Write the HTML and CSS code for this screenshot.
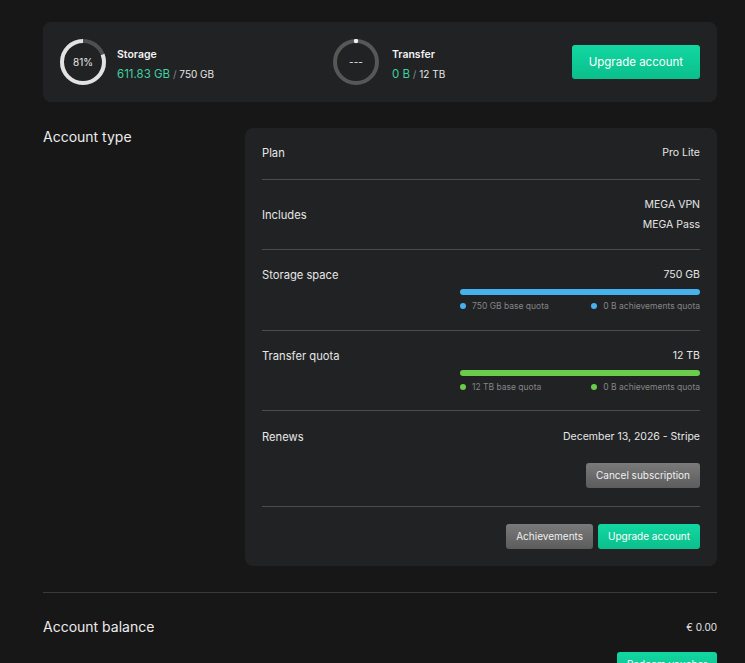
FILE: index.html
```html
<!DOCTYPE html>
<html lang="en">
<head>
  <meta charset="UTF-8">
  <meta name="viewport" content="width=device-width, initial-scale=1.0">
  <title>Account - MEGA</title>
  <link rel="stylesheet" href="styles.css">
</head>
<body>
  <div class="page">
    <div class="usage-card">
      <div class="usage storage">
        <div class="ring">
          <svg width="46" height="46" viewBox="0 0 46 46">
            <circle cx="23" cy="23" r="21" fill="none" stroke="#4f4f4f" stroke-width="4"/>
            <circle cx="23" cy="23" r="21" fill="none" stroke="#e2e2e2" stroke-width="4"
                    stroke-dasharray="106.9 132" stroke-dashoffset="-25.1" transform="rotate(-90 23 23)"/>
          </svg>
          <span class="ring-label">81%</span>
        </div>
        <div class="usage-text">
          <div class="usage-title">Storage</div>
          <div class="usage-value"><span class="used">611.83 GB</span> <span class="sep">/</span> 750 GB</div>
        </div>
      </div>
      <div class="usage transfer">
        <div class="ring">
          <svg width="46" height="46" viewBox="0 0 46 46">
            <circle cx="23" cy="23" r="21" fill="none" stroke="#575757" stroke-width="4"/>
            <circle cx="23" cy="2" r="2.2" fill="#f0f0f0"/>
          </svg>
          <span class="ring-label">---</span>
        </div>
        <div class="usage-text">
          <div class="usage-title">Transfer</div>
          <div class="usage-value"><span class="used">0 B</span> <span class="sep">/</span> 12 TB</div>
        </div>
      </div>
      <a href="#" class="btn btn-green btn-big">Upgrade account</a>
    </div>

    <section class="section">
      <h2 class="section-title">Account type</h2>
      <div class="plan-card">
        <div class="row plan">
          <span class="label">Plan</span>
          <span class="value">Pro Lite</span>
        </div>
        <div class="row includes">
          <span class="label">Includes</span>
          <div class="value stack">
            <span>MEGA VPN</span>
            <span>MEGA Pass</span>
          </div>
        </div>
        <div class="row top">
          <span class="label">Storage space</span>
          <div class="quota">
            <div class="quota-total value">750 GB</div>
            <div class="bar blue"></div>
            <div class="legend blue">
              <span><i class="dot"></i>750 GB base quota</span>
              <span><i class="dot"></i>0 B achievements quota</span>
            </div>
          </div>
        </div>
        <div class="row top transfer-row">
          <span class="label">Transfer quota</span>
          <div class="quota">
            <div class="quota-total value">12 TB</div>
            <div class="bar green"></div>
            <div class="legend green">
              <span><i class="dot"></i>12 TB base quota</span>
              <span><i class="dot"></i>0 B achievements quota</span>
            </div>
          </div>
        </div>
        <div class="row renews">
          <div class="renews-line">
            <span class="label">Renews</span>
            <span class="value">December 13, 2026 - Stripe</span>
          </div>
          <div class="actions">
            <a href="#" class="btn btn-grey">Cancel subscription</a>
          </div>
        </div>
        <div class="row last">
          <div class="actions">
            <a href="#" class="btn btn-grey">Achievements</a>
            <a href="#" class="btn btn-green">Upgrade account</a>
          </div>
        </div>
      </div>
    </section>

    <hr class="divider">

    <section class="balance">
      <div class="balance-line">
        <h2 class="section-title">Account balance</h2>
        <span class="value">€ 0.00</span>
      </div>
      <div class="actions">
        <a href="#" class="btn btn-green">Redeem voucher</a>
      </div>
    </section>
  </div>
</body>
</html>
```

FILE: styles.css
```css
* {
  margin: 0;
  padding: 0;
  box-sizing: border-box;
}

body {
  background: #171717;
  color: #e6e6e6;
  font-family: 'Inter', 'Liberation Sans', sans-serif;
  font-size: 11px;
  overflow: hidden;
}

.page {
  width: 674px;
  margin-left: 43px;
  padding-top: 22px;
}

/* usage summary */
.usage-card {
  display: flex;
  align-items: center;
  height: 80px;
  padding: 0 17px;
  background: #212224;
  border-radius: 8px;
}

.usage {
  display: flex;
  align-items: center;
  gap: 11px;
}

.usage.storage {
  width: 273px;
}

.usage.transfer {
  flex: 1;
  gap: 13px;
}

.ring {
  position: relative;
  width: 46px;
  height: 46px;
}

.ring svg {
  display: block;
}

.ring-label {
  position: absolute;
  inset: 0;
  display: flex;
  align-items: center;
  justify-content: center;
  font-size: 10px;
  color: #e8e8e8;
}

.usage-text {
  padding-top: 4px;
}

.usage-title {
  font-weight: 600;
  font-size: 10.5px;
  color: #f2f2f2;
  line-height: 16px;
}

.usage-value {
  margin-top: 3px;
  font-size: 10px;
  line-height: 16px;
  color: #e6e6e6;
}

.usage-value .used {
  color: #3fd1a0;
  font-size: 11.5px;
}

.usage-value .sep {
  color: #8a8a8a;
}

/* buttons */
.btn {
  display: inline-block;
  height: 25px;
  line-height: 25px;
  padding: 0 10px;
  border-radius: 3px;
  font-size: 10px;
  color: #f0f0f0;
  text-decoration: none;
  white-space: nowrap;
}

.btn-green {
  background: linear-gradient(180deg, #12d7a2, #0bbf8b);
  color: #fff;
}

.btn-grey {
  background: linear-gradient(180deg, #7a7a7a, #5c5c5c);
}

.btn-big {
  height: 34px;
  line-height: 34px;
  padding: 0 17px;
  font-size: 11.5px;
}

/* account type */
.section {
  display: grid;
  grid-template-columns: 202px 1fr;
  margin-top: 26px;
}

.section-title {
  font-size: 14px;
  font-weight: 400;
  color: #ececec;
  line-height: 18px;
}

.plan-card {
  background: #212224;
  border-radius: 8px;
  padding: 0 17px;
}

.row {
  display: flex;
  align-items: center;
  justify-content: space-between;
  padding: 16px 0;
  border-bottom: 1px solid #4c4c4c;
  line-height: 18px;
}

.row.plan {
  padding: 16px 0 17px;
}

.row.top {
  align-items: flex-start;
  padding-bottom: 17px;
}

.row.transfer-row {
  padding-bottom: 16px;
}

.row.includes {
  padding: 15px 0 14px;
}

.row.last {
  border-bottom: 0;
  padding: 17px 0;
}

.label {
  color: #e6e6e6;
  font-size: 11.2px;
}

.value {
  color: #e6e6e6;
  font-size: 10.5px;
  text-align: right;
}

.stack {
  display: flex;
  flex-direction: column;
  line-height: 20px;
}

.quota {
  width: 240px;
}

.quota-total {
  text-align: right;
}

.bar {
  height: 6px;
  border-radius: 3px;
  margin-top: 5px;
}

.bar.blue {
  background: #45b2ee;
}

.bar.green {
  background: #6bcb4b;
}

.legend {
  display: flex;
  justify-content: space-between;
  margin-top: 4px;
  font-size: 8.5px;
  line-height: 14px;
  color: #858585;
}

.dot {
  display: inline-block;
  width: 6px;
  height: 6px;
  border-radius: 50%;
  margin-right: 6px;
  vertical-align: 0;
}

.legend.blue .dot {
  background: #45b2ee;
}

.legend.green .dot {
  background: #6bcb4b;
}

.row.renews {
  display: block;
  padding: 17px 0 18px;
}

.renews-line {
  display: flex;
  justify-content: space-between;
}

.actions {
  display: flex;
  justify-content: flex-end;
  gap: 5px;
  width: 100%;
}

.renews .actions {
  margin-top: 17px;
}

/* balance */
.divider {
  border: 0;
  border-top: 1px solid #3a3a3a;
  margin-top: 26px;
}

.balance {
  padding-top: 25px;
}

.balance-line {
  display: flex;
  align-items: center;
  justify-content: space-between;
}

.balance .value {
  font-size: 10px;
}

.balance .actions {
  margin-top: 16px;
}
```
